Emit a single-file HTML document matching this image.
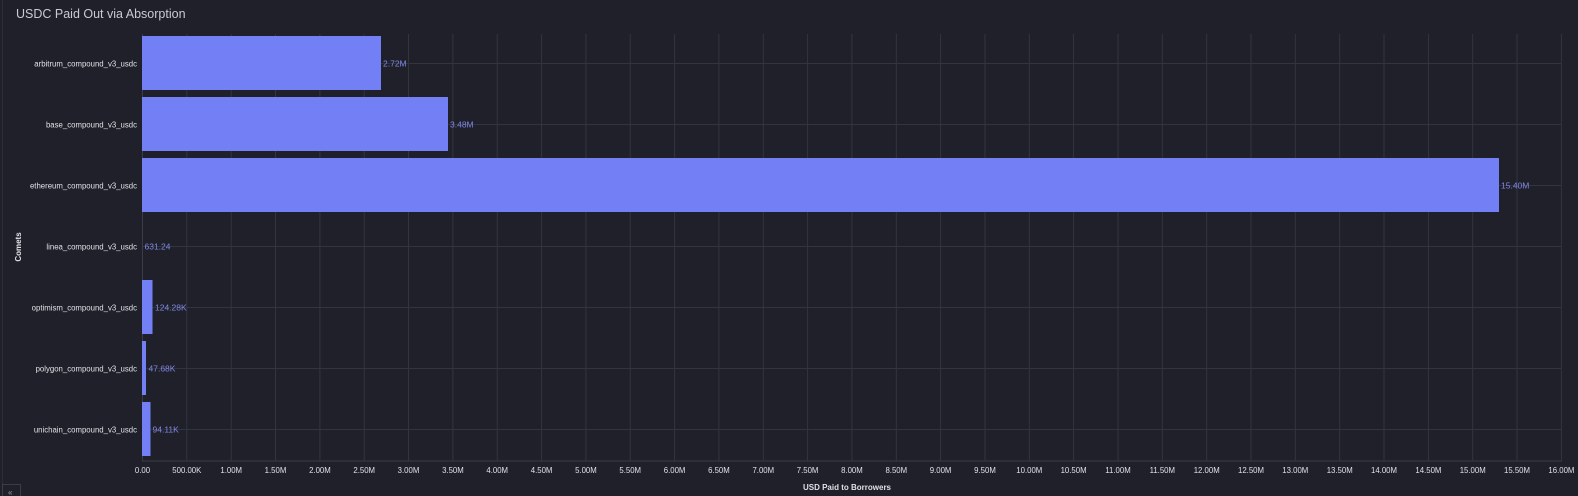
<!DOCTYPE html>
<html><head><meta charset="utf-8"><style>
html,body{margin:0;padding:0;background:#1f2029;width:1578px;height:496px;overflow:hidden}
svg{display:block}
text{font-family:"Liberation Sans",sans-serif}
</style></head><body>
<svg width="1578" height="496" viewBox="0 0 1578 496">
<rect width="1578" height="496" fill="#1f2029"/>
<line x1="2.5" y1="0" x2="2.5" y2="496" stroke="#2c2e38"/>
<text x="16" y="18" font-size="12.5" fill="#c9cbd2">USDC Paid Out via Absorption</text>
<g stroke="#32343f" stroke-width="1">
<line x1="186.8" y1="34" x2="186.8" y2="461"/><line x1="231.2" y1="34" x2="231.2" y2="461"/><line x1="275.5" y1="34" x2="275.5" y2="461"/><line x1="319.9" y1="34" x2="319.9" y2="461"/><line x1="364.2" y1="34" x2="364.2" y2="461"/><line x1="408.5" y1="34" x2="408.5" y2="461"/><line x1="452.9" y1="34" x2="452.9" y2="461"/><line x1="497.2" y1="34" x2="497.2" y2="461"/><line x1="541.6" y1="34" x2="541.6" y2="461"/><line x1="585.9" y1="34" x2="585.9" y2="461"/><line x1="630.2" y1="34" x2="630.2" y2="461"/><line x1="674.6" y1="34" x2="674.6" y2="461"/><line x1="718.9" y1="34" x2="718.9" y2="461"/><line x1="763.3" y1="34" x2="763.3" y2="461"/><line x1="807.6" y1="34" x2="807.6" y2="461"/><line x1="851.9" y1="34" x2="851.9" y2="461"/><line x1="896.3" y1="34" x2="896.3" y2="461"/><line x1="940.6" y1="34" x2="940.6" y2="461"/><line x1="985" y1="34" x2="985" y2="461"/><line x1="1029.3" y1="34" x2="1029.3" y2="461"/><line x1="1073.6" y1="34" x2="1073.6" y2="461"/><line x1="1118" y1="34" x2="1118" y2="461"/><line x1="1162.3" y1="34" x2="1162.3" y2="461"/><line x1="1206.7" y1="34" x2="1206.7" y2="461"/><line x1="1251" y1="34" x2="1251" y2="461"/><line x1="1295.3" y1="34" x2="1295.3" y2="461"/><line x1="1339.7" y1="34" x2="1339.7" y2="461"/><line x1="1384" y1="34" x2="1384" y2="461"/><line x1="1428.4" y1="34" x2="1428.4" y2="461"/><line x1="1472.7" y1="34" x2="1472.7" y2="461"/><line x1="1517" y1="34" x2="1517" y2="461"/><line x1="1561.4" y1="34" x2="1561.4" y2="461"/>
<line x1="142.5" y1="63.5" x2="1561.4" y2="63.5"/><line x1="142.5" y1="124.5" x2="1561.4" y2="124.5"/><line x1="142.5" y1="185.5" x2="1561.4" y2="185.5"/><line x1="142.5" y1="246.5" x2="1561.4" y2="246.5"/><line x1="142.5" y1="307.5" x2="1561.4" y2="307.5"/><line x1="142.5" y1="368.5" x2="1561.4" y2="368.5"/><line x1="142.5" y1="429.5" x2="1561.4" y2="429.5"/>
</g>
<line x1="142" y1="461" x2="1562" y2="461" stroke="#3a3c48"/>
<line x1="142.5" y1="34" x2="142.5" y2="461" stroke="#3a3c48"/>
<g fill="#7380f5">
<rect x="142" y="36" width="239" height="54"/>
<rect x="142" y="97" width="306" height="54"/>
<rect x="142" y="158" width="1357" height="54"/>
<rect x="142" y="280" width="10.5" height="54"/>
<rect x="142" y="341" width="4" height="54"/>
<rect x="142" y="402" width="8.5" height="54"/>
</g>
<g font-size="8.5" fill="#8088e6">
<text x="383" y="66.5">2.72M</text>
<text x="450" y="127.5">3.48M</text>
<text x="1501" y="188.5">15.40M</text>
<text x="144.5" y="249.5">631.24</text>
<text x="155" y="310.5">124.28K</text>
<text x="148.5" y="371.5">47.68K</text>
<text x="152.5" y="432.5">94.11K</text>
</g>
<g font-size="7.8" fill="#e0e1e6" text-anchor="end">
<text x="137" y="66.5">arbitrum_compound_v3_usdc</text>
<text x="137" y="127.5">base_compound_v3_usdc</text>
<text x="137" y="188.5">ethereum_compound_v3_usdc</text>
<text x="137" y="249.5">linea_compound_v3_usdc</text>
<text x="137" y="310.5">optimism_compound_v3_usdc</text>
<text x="137" y="371.5">polygon_compound_v3_usdc</text>
<text x="137" y="432.5">unichain_compound_v3_usdc</text>
</g>
<g font-size="7.8" fill="#e0e1e6" text-anchor="middle">
<text x="142.5" y="473">0.00</text><text x="186.8" y="473">500.00K</text><text x="231.2" y="473">1.00M</text><text x="275.5" y="473">1.50M</text><text x="319.9" y="473">2.00M</text><text x="364.2" y="473">2.50M</text><text x="408.5" y="473">3.00M</text><text x="452.9" y="473">3.50M</text><text x="497.2" y="473">4.00M</text><text x="541.6" y="473">4.50M</text><text x="585.9" y="473">5.00M</text><text x="630.2" y="473">5.50M</text><text x="674.6" y="473">6.00M</text><text x="718.9" y="473">6.50M</text><text x="763.3" y="473">7.00M</text><text x="807.6" y="473">7.50M</text><text x="851.9" y="473">8.00M</text><text x="896.3" y="473">8.50M</text><text x="940.6" y="473">9.00M</text><text x="985" y="473">9.50M</text><text x="1029.3" y="473">10.00M</text><text x="1073.6" y="473">10.50M</text><text x="1118" y="473">11.00M</text><text x="1162.3" y="473">11.50M</text><text x="1206.7" y="473">12.00M</text><text x="1251" y="473">12.50M</text><text x="1295.3" y="473">13.00M</text><text x="1339.7" y="473">13.50M</text><text x="1384" y="473">14.00M</text><text x="1428.4" y="473">14.50M</text><text x="1472.7" y="473">15.00M</text><text x="1517" y="473">15.50M</text><text x="1561.4" y="473">16.00M</text>
<text x="847" y="490" font-weight="bold" font-size="8">USD Paid to Borrowers</text>
<text transform="translate(21,247) rotate(-90)" font-weight="bold" font-size="8">Comets</text>
</g>
<rect x="2.5" y="484.5" width="18" height="14" fill="none" stroke="#3a3c48"/>
<text x="8" y="495" font-size="8" fill="#9a9ca6">«</text>
</svg>
</body></html>
